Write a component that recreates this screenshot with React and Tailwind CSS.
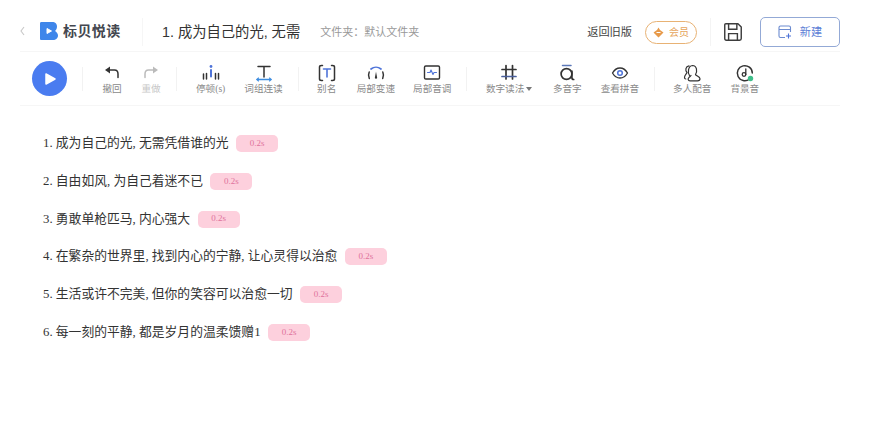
import React from "react";

const sentences = [
  "1. 成为自己的光, 无需凭借谁的光",
  "2. 自由如风, 为自己着迷不已",
  "3. 勇敢单枪匹马, 内心强大",
  "4. 在繁杂的世界里, 找到内心的宁静, 让心灵得以治愈",
  "5. 生活或许不完美, 但你的笑容可以治愈一切",
  "6. 每一刻的平静, 都是岁月的温柔馈赠1",
];

const Svg = ({ children, size = 20 }) => (
  <svg width={size} height={size} viewBox="0 0 20 20" fill="none" strokeLinecap="round" strokeLinejoin="round">
    {children}
  </svg>
);

const dark = "#3d3d3d";
const blue = "#4f74d9";

const icons = {
  undo: (
    <Svg>
      <path d="M3 7 L8 3.5 V10.5 Z" fill="#333" />
      <path d="M7 7 H12.5 C15 7 16 9 16 11 V14.5" stroke="#333" strokeWidth="1.5" />
    </Svg>
  ),
  redo: (
    <Svg>
      <path d="M17 7 L12 3.5 V10.5 Z" fill="#bbb" />
      <path d="M13 7 H7.5 C5 7 4 9 4 11 V14.5" stroke="#bbb" strokeWidth="1.5" />
    </Svg>
  ),
  pause: (
    <Svg>
      <path d="M2.5 11 V16 M5.5 10.5 V16 M14.5 10.5 V16 M17.5 10.5 V16" stroke="#333" strokeWidth="1.5" />
      <path d="M10 7 V13.5" stroke={blue} strokeWidth="2" />
      <circle cx="10" cy="3.5" r="1.4" fill={blue} />
    </Svg>
  ),
  link: (
    <Svg>
      <path d="M4 3.5 H16 M10 3.5 V14" stroke="#333" strokeWidth="1.5" />
      <path d="M3 16.5 H17" stroke="#3f8ee0" strokeWidth="1.6" />
      <path d="M4.5 15 L3 16.5 L4.5 18 M15.5 15 L17 16.5 L15.5 18" stroke="#3f8ee0" strokeWidth="1.1" />
    </Svg>
  ),
  alias: (
    <Svg>
      <path d="M5.5 2.5 H4.5 C3.5 2.5 2.5 3.2 2.5 4 V16 C2.5 17 3.5 17.5 4.5 17.5 H5.5 M14.5 2.5 H15.5 C16.5 2.5 17.5 3.2 17.5 4 V16 C17.5 17 16.5 17.5 15.5 17.5 H14.5" stroke="#333" strokeWidth="1.5" />
      <path d="M6.5 6 H13.5 M10 6 V14" stroke={blue} strokeWidth="1.6" />
    </Svg>
  ),
  speed: (
    <Svg>
      <path d="M5 6 A8 8 0 0 1 15 6" stroke={blue} strokeWidth="1.7" />
      <path d="M3.2 9 C2.3 11 2.4 13.5 3.3 15.5 M16.8 9 C17.7 11 17.6 13.5 16.7 15.5" stroke="#333" strokeWidth="1.5" />
      <path d="M10 8.5 L11.2 15 A1.3 1.3 0 0 1 8.8 15 Z" fill="#333" />
    </Svg>
  ),
  tone: (
    <Svg>
      <rect x="2.5" y="3" width="15" height="13" rx="1.3" stroke="#333" strokeWidth="1.4" />
      <path d="M5.5 9.5 H8 L9 7 L11 11.5 L12 9.5 H14.5" stroke={blue} strokeWidth="1.1" />
    </Svg>
  ),
  number: (
    <Svg>
      <path d="M7 2.5 V16 M13.5 2.5 V16 M3 6.5 H17" stroke="#333" strokeWidth="1.7" />
      <path d="M3 13.5 H17" stroke="#4a5f9c" strokeWidth="1.7" />
    </Svg>
  ),
  poly: (
    <Svg>
      <path d="M5.5 2.5 H14" stroke="#5b78b8" strokeWidth="1.5" />
      <circle cx="9.5" cy="11" r="5.4" stroke="#333" strokeWidth="1.7" />
      <path d="M14.9 8 V14.5 C14.9 15.5 15.7 16.5 16.7 16.5" stroke="#333" strokeWidth="1.7" />
    </Svg>
  ),
  eye: (
    <Svg>
      <path d="M2.5 10 C4.5 6.5 7 5 10 5 C13 5 15.5 6.5 17.5 10 C15.5 13.5 13 15 10 15 C7 15 4.5 13.5 2.5 10 Z" stroke="#333" strokeWidth="1.3" />
      <circle cx="10" cy="10" r="2.3" stroke={blue} strokeWidth="1.5" />
    </Svg>
  ),
  people: (
    <Svg>
      <path d="M7.5 12.5 C5.5 9.5 6 3 10.5 2.5 C15 2.5 15.5 8.5 13.5 11.5 C14 13 18 13.5 18 15.8 C18 17 17 17.8 15.5 17.8 H8 C6 17.8 5.5 15.8 7 14.3 C8 13.3 8.5 13.3 9 12.5" stroke="#333" strokeWidth="1.2" />
      <path d="M7 2.8 C3.5 3.3 3 7.5 5 9.5 C4.5 11 2.5 12 2.5 14.5 C2.5 15.5 3 16 3.8 16" stroke="#333" strokeWidth="1.2" />
    </Svg>
  ),
  music: (
    <Svg>
      <path d="M14.5 16 A7.5 7.5 0 1 1 17.3 10" stroke="#333" strokeWidth="1.5" />
      <circle cx="9" cy="11.5" r="1.8" stroke="#333" strokeWidth="1.3" />
      <path d="M10.8 11.5 V6" stroke="#333" strokeWidth="1.3" />
      <circle cx="15.5" cy="15.5" r="2.7" fill="#3fbf8a" />
    </Svg>
  ),
};

const ToolItem = ({ icon, label, muted, caret, className = "" }) => (
  <div className={`flex flex-col items-center shrink-0 ${className}`}>
    <div className="h-5 flex items-center justify-center">{icons[icon]}</div>
    <div className={`flex items-center text-[9.6px] leading-3 whitespace-nowrap font-['Liberation_Serif','Noto_Sans_CJK_SC',serif] ${muted ? "text-[#c8c8c8]" : "text-[#8a8a8a]"}`}>
      {label}
      {caret && <span className="ml-[1.6px] w-0 h-0 border-x-[3px] border-x-transparent border-t-[4px] border-t-[#777]" />}
    </div>
  </div>
);

const Divider = () => <div className="w-px h-6 bg-[#f2f2f2] mx-[15px] shrink-0" />;

const App = () => {
  return (
    <div className="w-[896px] h-[441px] bg-white overflow-hidden font-['Liberation_Sans','Noto_Sans_CJK_SC',sans-serif]">
      <div className="w-[820px] ml-5">
        {/* Header */}
        <div className="h-[52px] pt-[13px] flex items-center border-b border-[#f6f6f6]">
          <svg width="5" height="10" viewBox="0 0 5 10" fill="none" className="mb-[2px]">
            <path d="M4 1 L1 5 L4 9" stroke="#c8c8c8" strokeWidth="1.1" />
          </svg>
          <svg className="ml-[15px] mb-[2px]" width="18" height="18" viewBox="0 0 18 18">
            <path d="M1.5 0 H12 C15.5 0 17 2 17 4.5 C17 6.5 16 8 15 9 C16.5 10 18 11.5 18 13.5 C18 16 16 18 13 18 H1.5 C0.5 18 0 17.5 0 16.5 V1.5 C0 0.5 0.5 0 1.5 0 Z" fill="#3f86ea" />
            <path d="M7 6.5 L11.5 9 L7 11.5 Z" fill="white" stroke="white" strokeLinejoin="round" />
          </svg>
          <span className="ml-[5px] mb-[2px] w-[58px] text-[14px] font-bold tracking-[0.4px] text-[#44474f] whitespace-nowrap">标贝悦读</span>
          <div className="w-px h-7 bg-[#f6f6f6] ml-[21px]" />
          <span className="ml-[19px] mt-[2px] text-[14.3px] text-[#333] whitespace-nowrap">1. 成为自己的光, 无需</span>
          <span className="ml-5 text-[11px] text-[#999] whitespace-nowrap">文件夹：默认文件夹</span>
          <span className="ml-auto text-[11.2px] text-[#444] whitespace-nowrap">返回旧版</span>
          <div className="ml-[13px] w-[52px] h-[23px] rounded-full border border-[#e8b274] flex items-center justify-center gap-[5px]">
            <svg width="11" height="11" viewBox="0 0 11 11">
              <path d="M5.5 0.5 L7 3 L10.5 5.5 L5.5 10.5 L0.5 5.5 L4 3 Z" fill="#e79a4a" />
              <path d="M3.5 5.5 H7.5" stroke="white" strokeWidth="1" />
            </svg>
            <span className="text-[10px] text-[#e6a55c]">会员</span>
          </div>
          <div className="ml-[13px] w-px h-7 bg-[#f4f4f4]" />
          <svg className="ml-[11px]" width="22" height="22" viewBox="0 0 20 20" fill="none">
            <path d="M3.5 2.5 H14.5 L17.5 5.5 V16 C17.5 17 17 17.5 16 17.5 H4 C3 17.5 2.5 17 2.5 16 V3.5 C2.5 3 3 2.5 3.5 2.5 Z" stroke={dark} strokeWidth="1.3" strokeLinejoin="round" />
            <path d="M6 2.5 V7.5 H13.5 V2.5 M6 17.5 V11.5 H14 V17.5" stroke={dark} strokeWidth="1.3" />
          </svg>
          <button className="ml-4 w-20 h-[30px] rounded-[5px] border border-[#93a9d6] flex items-center justify-center gap-[8px]">
            <svg width="14" height="14" viewBox="0 0 14 14" fill="none">
              <path d="M7 12.5 H2.5 C1.5 12.5 1 12 1 11 V2.5 C1 1.5 1.5 1 2.5 1 H11 C12 1 12.5 1.5 12.5 2.5 V7 M1 4.5 H12.5" stroke="#6c8bd0" strokeWidth="1.1" />
              <path d="M8 11 H13 M10.5 8.5 V13.5" stroke="#4f74d9" strokeWidth="1.1" />
            </svg>
            <span className="text-[11.2px] text-[#5d80d6]">新建</span>
          </button>
        </div>

        {/* Toolbar */}
        <div className="h-[54px] flex items-center border-b border-[#f6f6f6] pl-3">
          <button className="w-[35px] h-[35px] rounded-full bg-[#4a7cf0] flex items-center justify-center shrink-0">
            <svg width="14" height="14" viewBox="0 0 14 14">
              <path d="M3 2 L12 7 L3 12 Z" fill="white" stroke="white" strokeWidth="1.5" strokeLinejoin="round" />
            </svg>
          </button>
          <Divider />
          <div className="flex gap-[19px] ml-[4px]">
            <ToolItem icon="undo" label="撤回" />
            <ToolItem icon="redo" label="重做" muted />
          </div>
          <Divider />
          <div className="flex gap-[19px] ml-[4px]">
            <ToolItem icon="pause" label="停顿(s)" />
            <ToolItem icon="link" label="词组连读" />
          </div>
          <Divider />
          <div className="flex gap-5 ml-[3px]">
            <ToolItem icon="alias" label="别名" />
            <ToolItem icon="speed" label="局部变速" />
            <ToolItem icon="tone" label="局部音调" className="-ml-[2px]" />
          </div>
          <Divider />
          <div className="flex gap-[19px] ml-[3.5px]">
            <ToolItem icon="number" label="数字读法" caret />
            <ToolItem icon="poly" label="多音字" className="ml-[2px]" />
            <ToolItem icon="eye" label="查看拼音" />
          </div>
          <Divider />
          <div className="flex gap-[19px] ml-[3px]">
            <ToolItem icon="people" label="多人配音" />
            <ToolItem icon="music" label="背景音" />
          </div>
        </div>

        {/* Sentences */}
        <div className="pt-[29px] pl-[23px] flex flex-col gap-[20.8px] font-['Liberation_Serif','Noto_Sans_CJK_SC',serif]">
          {sentences.map((text) => (
            <div key={text} className="flex items-center h-[17px]">
              <span className="text-[12.8px] text-[#333] whitespace-nowrap">{text}</span>
              <span className="ml-[7.5px] w-[42px] h-[17px] rounded-[5px] bg-[#fdd0dd] flex items-center justify-center text-[9px] text-[#e0729c]">0.2s</span>
            </div>
          ))}
        </div>
      </div>
    </div>
  );
};

export default App;
